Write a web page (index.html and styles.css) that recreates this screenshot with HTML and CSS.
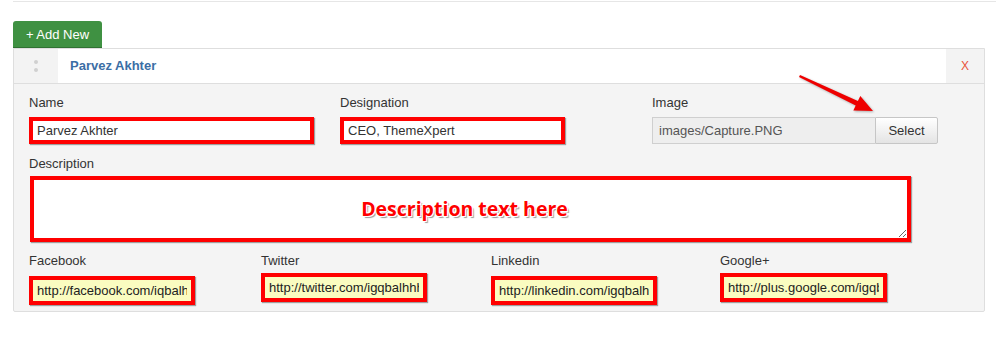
FILE: index.html
```html
<!DOCTYPE html>
<html lang="en">
<head>
  <meta charset="UTF-8">
  <title>Team Members</title>
  <link rel="stylesheet" href="styles.css">
</head>
<body>
  <div class="topline"></div>
  <div class="wrap">
    <button class="btn-add">+ Add New</button>

    <div class="panel">
      <div class="panel-head">
        <div class="handle"><span class="dots"></span></div>
        <div class="title">Parvez Akhter</div>
        <div class="close">X</div>
      </div>

      <div class="panel-body">
        <div class="row3">
          <div class="field">
            <label>Name</label>
            <input type="text" class="mark name-input" value="Parvez Akhter">
          </div>
          <div class="field">
            <label>Designation</label>
            <input type="text" class="mark desig-input" value="CEO, ThemeXpert">
          </div>
          <div class="field">
            <label>Image</label>
            <div class="image-group">
              <input type="text" class="image-input" value="images/Capture.PNG" readonly>
              <button class="btn-select">Select</button>
            </div>
          </div>
        </div>

        <div class="field desc-field">
          <label>Description</label>
          <textarea class="mark desc">Description text here</textarea>
        </div>

        <div class="row4">
          <div class="field">
            <label>Facebook</label>
            <input type="text" class="mark social" value="http://facebook.com/iqbalhhh">
          </div>
          <div class="field">
            <label>Twitter</label>
            <input type="text" class="mark social up" value="http://twitter.com/igqbalhhh">
          </div>
          <div class="field">
            <label>Linkedin</label>
            <input type="text" class="mark social" value="http://linkedin.com/igqbalhhh">
          </div>
          <div class="field">
            <label>Google+</label>
            <input type="text" class="mark social up wide" value="http://plus.google.com/igqbalhhh">
          </div>
        </div>
      </div>
    </div>
  </div>

  <!-- annotation arrow pointing at the Select button -->
  <svg class="arrow" width="85" height="45" viewBox="0 0 85 45">
    <polygon points="5,3 62.9,28.9 65.3,24 78,39 58.3,38.4 60.7,33.5 4,5" fill="#ee0000"/>
  </svg>
</body>
</html>
```

FILE: styles.css
```css
body {
  margin: 0;
  padding: 0;
  background-color: #fff;
  font-family: "Liberation Sans", Arial, sans-serif;
  font-size: 13px;
  color: #333;
}
.topline {
  margin: 1px 0 0 13px;
  height: 1px;
  background-color: #e6e6e6;
}
.wrap {
  margin: 19px 11px 0 13px;
}
.btn-add {
  display: block;
  height: 27px;
  width: 89px;
  padding: 0;
  background-color: #3f9142;
  border: none;
  border-bottom: 1px solid #2f7232;
  border-radius: 3px 3px 0 0;
  color: #fff;
  font-family: "Liberation Sans", Arial, sans-serif;
  font-size: 13px;
}
.panel {
  border: 1px solid #dedede;
  background-color: #f4f4f4;
  border-radius: 0 0 2px 2px;
}
.panel-head {
  display: flex;
  height: 34px;
  background-color: #fff;
  border-bottom: 1px solid #dedede;
}
.handle {
  width: 44px;
  background-color: #f3f3f3;
  display: flex;
  justify-content: center;
  align-items: center;
}
.dots {
  width: 0;
  height: 12px;
  border-left: 4px dotted #d0d0d0;
}
.title {
  flex: 1;
  padding-left: 12px;
  line-height: 34px;
  font-weight: bold;
  color: #3b6ea5;
}
.close {
  width: 38px;
  background-color: #f3f3f3;
  text-align: center;
  line-height: 34px;
  color: #e8533c;
  font-size: 12px;
}
.panel-body {
  padding: 10px 15px 6px 15px;
}
.field label {
  display: block;
  line-height: 18px;
  color: #333;
}
.row3 {
  display: grid;
  grid-template-columns: 311px 312px 300px;
}
input {
  font-family: "Liberation Sans", Arial, sans-serif;
  font-size: 13px;
  box-sizing: border-box;
  margin: 0;
}
.mark {
  border: 4px solid #ff0000;
  outline: none;
  box-shadow: 1px 1px 1px rgba(0, 0, 0, 0.35);
  background-color: #fff;
  color: #333;
  padding: 0 4px;
}
.name-input {
  display: block;
  width: 285px;
  height: 27px;
  margin-top: 5px;
}
.desig-input {
  display: block;
  width: 225px;
  height: 27px;
  margin-top: 5px;
}
.image-group {
  display: flex;
  margin-top: 5px;
}
.image-input {
  width: 223px;
  height: 27px;
  border: 1px solid #cfcfcf;
  border-right: none;
  background-color: #eeeeee;
  color: #555;
  padding: 0 6px;
  outline: none;
}
.btn-select {
  width: 63px;
  height: 27px;
  border: 1px solid #c6c6c6;
  border-radius: 0 2px 2px 0;
  background: linear-gradient(#ffffff, #e4e4e4);
  color: #333;
  font-family: "Liberation Sans", Arial, sans-serif;
  font-size: 13px;
  padding: 0;
}
.desc-field {
  margin-top: 11px;
}
.desc {
  display: block;
  box-sizing: border-box;
  width: 881px;
  height: 66px;
  margin: 3px 0 0 1px;
  padding: 15px 12px 0 0;
  text-align: center;
  font-family: "Open Sans", "DejaVu Sans", sans-serif;
  font-size: 19.5px;
  font-weight: bold;
  color: #ff0000;
  text-shadow: 1px 1px 0 #fff, -1px -1px 0 #fff, 1px -1px 0 #fff, -1px 1px 0 #fff, 2px 2px 1px #999;
  overflow: hidden;
  resize: vertical;
}
.row4 {
  display: grid;
  grid-template-columns: 232px 230px 229px 200px;
  margin-top: 10px;
}
.social {
  display: block;
  width: 166px;
  height: 29px;
  margin-top: 6px;
  background-color: #fafcc0;
  color: #222;
  padding: 0 4px;
}
.social.up {
  margin-top: 3px;
}
.social.wide {
  width: 167px;
}
.arrow {
  position: absolute;
  left: 795px;
  top: 72px;
  filter: drop-shadow(1px 1px 1px rgba(0, 0, 0, 0.3));
}
```
